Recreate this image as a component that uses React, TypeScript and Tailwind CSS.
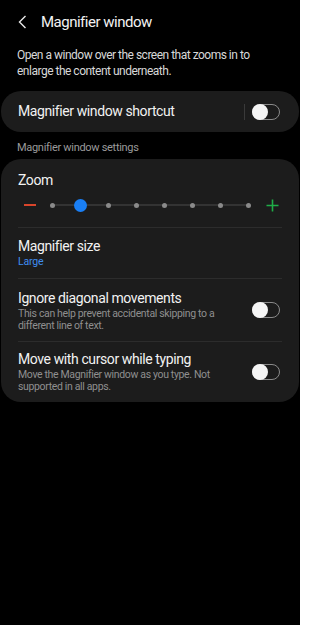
import React from 'react';

function Toggle() {
  return (
    <div className="flex h-[16px] w-[28px] shrink-0 items-center rounded-full border-[1.5px] border-[#8a8a8a] bg-[#1c1c1c]">
      <div className="-ml-[1.5px] h-[16px] w-[16px] rounded-full bg-[#f5f5f5]" />
    </div>
  );
}

function Divider() {
  return <div className="mx-[17px] h-px bg-[#2c2c2c]" />;
}

function ZoomSlider() {
  const steps = [0, 1, 2, 3, 4, 5, 6, 7];
  return (
    <div className="flex h-[22px] items-center">
      <div className="w-[38px] pl-[23px]">
        <div className="h-[2px] w-[12px] bg-[#d9452b]" />
      </div>
      <div className="relative grid w-[223px] grid-cols-8 items-center">
        <div className="absolute left-[14px] right-[14px] top-1/2 h-px -translate-y-1/2 bg-[#4a4a4a]" />
        {steps.map((s) => (
          <div key={s} className="relative flex justify-center">
            {s === 1 ? (
              <div className="h-[13px] w-[13px] rounded-full bg-[#1a7ff5]" />
            ) : (
              <div className="h-[5px] w-[5px] rounded-full bg-[#8a8a8a]" />
            )}
          </div>
        ))}
      </div>
      <svg width="13" height="13" viewBox="0 0 13 13" className="ml-[3.5px]">
        <path d="M6.5 0.5v12M0.5 6.5h12" stroke="#1fae48" strokeWidth="1.6" />
      </svg>
    </div>
  );
}

export default function App() {
  return (
    <div
      className="h-[625px] w-[300px] bg-black text-[#f2f2f2]"
      style={{ fontFamily: 'Roboto, "Noto Sans", sans-serif' }}
    >
      <div className="flex h-[42px] items-center pl-[18px] pt-[3px]">
        <svg width="9" height="14" viewBox="0 0 9 14" className="mt-[-1px]">
          <path d="M7.5 1L1.5 7l6 6" stroke="#e8e8e8" strokeWidth="1.4" fill="none" />
        </svg>
        <span className="ml-[14px] text-[15px] leading-none tracking-[-0.5px]">Magnifier window</span>
      </div>

      <p className="mt-[5px] px-[17px] text-[12px] leading-[16px] tracking-[-0.5px] text-[#d8d8d8]">
        Open a window over the screen that zooms in to enlarge the content underneath.
      </p>

      <div className="mx-[1px] mt-[12px] flex h-[41px] items-center rounded-[20px] bg-[#1c1c1c] pl-[17px] pr-[19px]">
        <span className="flex-1 text-[14px] tracking-[-0.4px]">Magnifier window shortcut</span>
        <div className="mr-[7px] h-[16px] w-px bg-[#3a3a3a]" />
        <Toggle />
      </div>

      <div className="flex h-[27px] items-center px-[17px] pt-[5px] text-[11px] tracking-[-0.3px] text-[#9a9a9a]">
        Magnifier window settings
      </div>

      <div className="mx-[1px] rounded-[20px] bg-[#1c1c1c] pb-[1px]">
        <div className="flex h-[68px] flex-col pt-[12px]">
          <span className="px-[17px] text-[14px] leading-[18px] tracking-[-0.4px]">Zoom</span>
          <div className="mt-[5px]">
            <ZoomSlider />
          </div>
        </div>
        <Divider />
        <div className="flex h-[50px] flex-col justify-center px-[17px]">
          <span className="text-[14px] leading-[18px] tracking-[-0.4px]">Magnifier size</span>
          <span className="text-[10.5px] leading-[14px] tracking-[-0.2px] text-[#3f8ef0]">Large</span>
        </div>
        <Divider />
        <div className="flex h-[62px] items-center pl-[17px] pr-[19px]">
          <div className="mr-[8px] flex flex-1 flex-col">
            <span className="text-[14px] leading-[18px] tracking-[-0.4px]">Ignore diagonal movements</span>
            <span className="mt-[1px] text-[10.5px] leading-[12px] tracking-[-0.35px] text-[#8f8f8f]">
              This can help prevent accidental skipping to a different line of text.
            </span>
          </div>
          <Toggle />
        </div>
        <Divider />
        <div className="flex h-[59px] items-center pl-[17px] pr-[19px]">
          <div className="mr-[8px] flex flex-1 flex-col">
            <span className="text-[14px] leading-[18px] tracking-[-0.4px]">Move with cursor while typing</span>
            <span className="mt-[1px] text-[10.5px] leading-[12px] tracking-[-0.35px] text-[#8f8f8f]">
              Move the Magnifier window as you type. Not supported in all apps.
            </span>
          </div>
          <Toggle />
        </div>
      </div>
    </div>
  );
}
